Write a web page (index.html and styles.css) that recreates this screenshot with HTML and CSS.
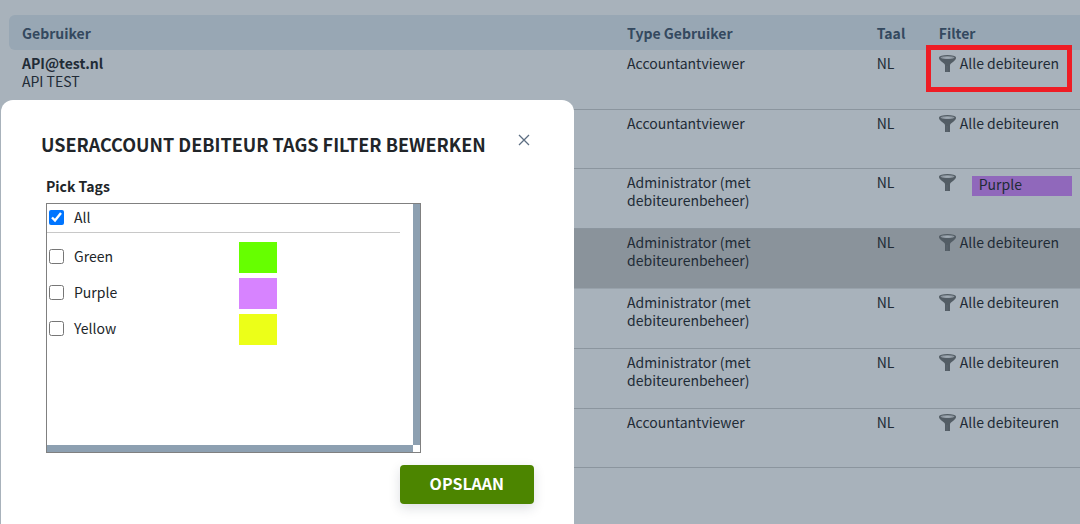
FILE: index.html
```html
<!DOCTYPE html>
<html lang="nl">

<head>
    <meta charset="UTF-8">
    <meta name="viewport" content="width=device-width, initial-scale=1.0">
    <title>Gebruikers</title>
    <link rel="stylesheet" href="styles.css">
</head>

<body>
    <svg class="sprite" aria-hidden="true">
        <symbol id="funnel" viewBox="0 0 17 17">
            <path d="M0 2.6C0 4.6 1 5.4 2.4 6.4L5 8.5C5.8 9.2 6 9.8 6 10.8V17H11V10.8C11 9.8 11.2 9.2 12 8.5L14.6 6.4C16 5.4 17 4.6 17 2.6Z" fill="#535d65" />
            <ellipse cx="8.5" cy="2.6" rx="8.5" ry="2.6" fill="#535d65" />
            <ellipse cx="8.5" cy="2.6" rx="7" ry="1.5" fill="#87919a" />
            <path d="M3.6 2.8C6 2 11 2 13.4 2.8C11 3.8 6 3.8 3.6 2.8Z" fill="#a8b2bb" />
            <path d="M8 11V17" stroke="#5d6770" />
        </symbol>
    </svg>

    <main>
        <table class="users">
            <thead>
                <tr>
                    <th class="col-user">Gebruiker</th>
                    <th class="col-type">Type Gebruiker</th>
                    <th class="col-lang">Taal</th>
                    <th>Filter</th>
                </tr>
            </thead>
            <tbody>
                <tr>
                    <td><strong>API@test.nl</strong><br>API TEST</td>
                    <td>Accountantviewer</td>
                    <td>NL</td>
                    <td class="marked">
                        <button type="button" class="filter"><svg class="icon"><use href="#funnel" /></svg>Alle debiteuren</button>
                    </td>
                </tr>
                <tr>
                    <td></td>
                    <td>Accountantviewer</td>
                    <td>NL</td>
                    <td>
                        <button type="button" class="filter"><svg class="icon"><use href="#funnel" /></svg>Alle debiteuren</button>
                    </td>
                </tr>
                <tr>
                    <td></td>
                    <td>Administrator (met debiteurenbeheer)</td>
                    <td>NL</td>
                    <td>
                        <button type="button" class="filter"><svg class="icon"><use href="#funnel" /></svg><span class="tag">Purple</span></button>
                    </td>
                </tr>
                <tr class="active">
                    <td></td>
                    <td>Administrator (met debiteurenbeheer)</td>
                    <td>NL</td>
                    <td>
                        <button type="button" class="filter"><svg class="icon"><use href="#funnel" /></svg>Alle debiteuren</button>
                    </td>
                </tr>
                <tr>
                    <td></td>
                    <td>Administrator (met debiteurenbeheer)</td>
                    <td>NL</td>
                    <td>
                        <button type="button" class="filter"><svg class="icon"><use href="#funnel" /></svg>Alle debiteuren</button>
                    </td>
                </tr>
                <tr>
                    <td></td>
                    <td>Administrator (met debiteurenbeheer)</td>
                    <td>NL</td>
                    <td>
                        <button type="button" class="filter"><svg class="icon"><use href="#funnel" /></svg>Alle debiteuren</button>
                    </td>
                </tr>
                <tr>
                    <td></td>
                    <td>Accountantviewer</td>
                    <td>NL</td>
                    <td>
                        <button type="button" class="filter"><svg class="icon"><use href="#funnel" /></svg>Alle debiteuren</button>
                    </td>
                </tr>
            </tbody>
        </table>
    </main>

    <div class="modal" role="dialog" aria-labelledby="modal-title">
        <div class="modal-header">
            <h1 id="modal-title">USERACCOUNT DEBITEUR TAGS FILTER BEWERKEN</h1>
            <button type="button" class="close" aria-label="Sluiten">
                <svg viewBox="0 0 12 12"><path d="M1 1L11 11M11 1L1 11" /></svg>
            </button>
        </div>
        <form class="modal-body">
            <h2>Pick Tags</h2>
            <div class="tag-box">
                <div class="tag-list">
                    <div class="all">
                        <label><input type="checkbox" checked>All</label>
                    </div>
                    <div class="option">
                        <label><input type="checkbox">Green</label>
                        <span class="green"></span>
                    </div>
                    <div class="option">
                        <label><input type="checkbox">Purple</label>
                        <span class="purple"></span>
                    </div>
                    <div class="option">
                        <label><input type="checkbox">Yellow</label>
                        <span class="yellow"></span>
                    </div>
                </div>
                <div class="track"></div>
                <div class="track"></div>
            </div>
            <button type="submit" class="save">OPSLAAN</button>
        </form>
    </div>
</body>

</html>
```
FILE: styles.css
```css
* {
    margin: 0;
    padding: 0;
    box-sizing: border-box;
}

body {
    min-height: 100vh;
    overflow: hidden;
    background-color: #a8b2bb;
    color: #212b36;
    font-family: "Noto Sans CJK SC", "Open Sans", sans-serif;
    font-size: 14px;
    line-height: 18px;
}

button {
    border: none;
    background: none;
    color: inherit;
    font: inherit;
    cursor: pointer;
}

.sprite {
    display: none;
}

main {
    padding: 15px 0 0 9px;
}

/* users table */
.users {
    width: 100%;
    table-layout: fixed;
    border-collapse: separate;
    border-spacing: 0;
}

.users th {
    height: 35px;
    padding: 0 13px;
    background-color: #98a7b4;
    color: #34495f;
    text-align: left;
}

.users th:first-child {
    border-radius: 6px 0 0 6px;
}

.col-user {
    width: 56.5%;
}

.col-type {
    width: 23.3%;
}

.col-lang {
    width: 5.8%;
}

.users td {
    height: 59px;
    padding: 4px 8px 19px 13px;
    border-bottom: 1px solid #8b959e;
    vertical-align: top;
}

.users .active td {
    border-color: #98a2ab;
    background-color: #8a939b;
}

.filter {
    display: flex;
    width: 100%;
    gap: 4px;
    text-align: left;
    white-space: nowrap;
}

.icon {
    flex: none;
    width: 17px;
    height: 17px;
    margin-top: 1px;
}

.tag {
    flex: 1;
    height: 20px;
    margin: 3px 0 0 12px;
    padding-left: 7px;
    background-color: #9068bb;
    line-height: 16px;
}

.marked {
    position: relative;
}

.marked::after {
    content: "";
    position: absolute;
    top: -5px;
    right: 8px;
    bottom: 17px;
    left: 0;
    border: 5px solid #ee1c24;
    pointer-events: none;
}

/* modal */
.modal {
    position: absolute;
    top: 100px;
    left: 1px;
    bottom: 0;
    width: 100%;
    max-width: 573px;
    padding: 32px 40px 0;
    border-radius: 12px 12px 0 0;
    background-color: #fff;
    color: #212529;
}

.modal-header {
    display: flex;
    justify-content: space-between;
    align-items: flex-start;
}

h1 {
    font-size: 18px;
    line-height: 24px;
    white-space: nowrap;
}

.close {
    padding: 2px 4px;
}

.close svg {
    display: block;
    width: 12px;
    height: 12px;
    fill: none;
    stroke: #5c6e82;
    stroke-width: 1.3;
}

.modal-body {
    display: flex;
    flex-direction: column;
    padding-top: 21px;
}

h2 {
    padding-left: 5px;
    font-size: 14px;
    line-height: 18px;
}

.tag-box {
    display: grid;
    grid-template-columns: 1fr 7px;
    grid-template-rows: 1fr 7px;
    width: 375px;
    height: 250px;
    margin: 8px 0 12px 5px;
    border: 1px solid #808080;
}

.tag-list {
    padding-right: 13px;
}

.track {
    background-color: #8da0b1;
}

.all {
    height: 29px;
    margin-bottom: 9px;
    padding: 4px 2px 0;
    border-bottom: 1px solid #c8c8c8;
}

.option {
    display: grid;
    grid-template-columns: 190px 38px;
    height: 31px;
    margin-bottom: 5px;
    padding: 0 2px;
}

.option label {
    padding-top: 5px;
}

label {
    display: flex;
    align-items: flex-start;
    gap: 10px;
}

input {
    width: 15px;
    height: 15px;
    margin-top: 2px;
}

.green {
    background-color: #66ff00;
}

.purple {
    background-color: #d783ff;
}

.yellow {
    background-color: #ecff18;
}

.save {
    align-self: flex-end;
    padding: 6px 30px 9px;
    border-radius: 4px;
    background-color: #4c8500;
    box-shadow: 0 4px 12px rgba(30, 40, 60, 0.15);
    color: #fff;
    font-size: 16px;
    font-weight: 700;
    line-height: 24px;
}
```
